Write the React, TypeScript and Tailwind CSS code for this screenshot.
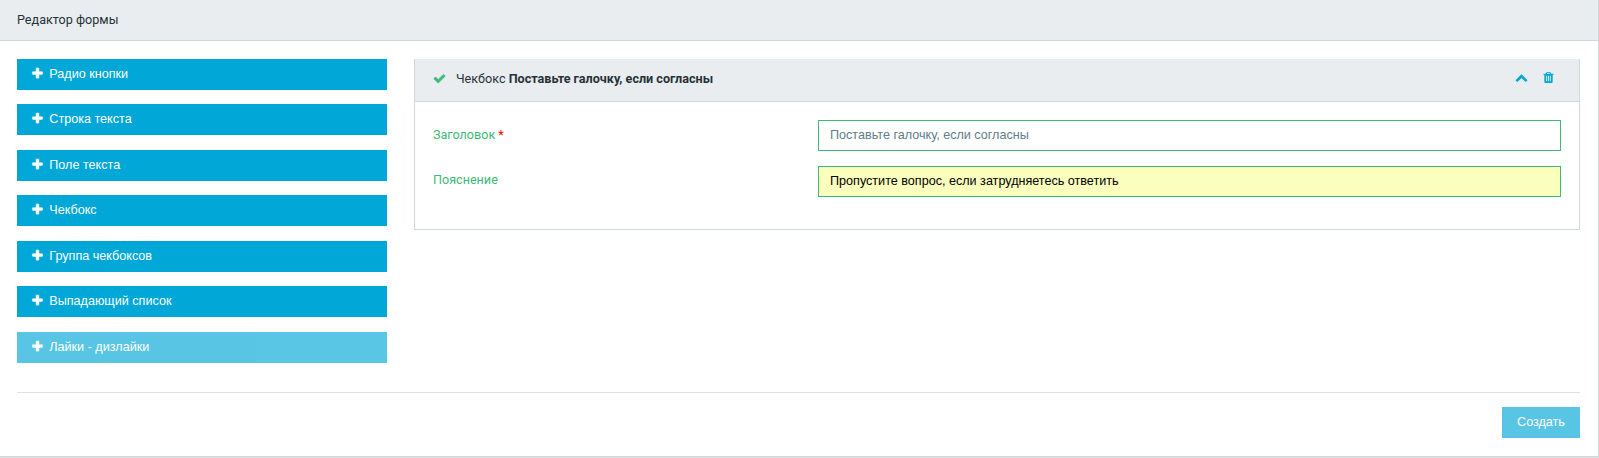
import React from "react";

const icons = {
  plus: "M1600 736v192q0 40-28 68t-68 28h-416v416q0 40-28 68t-68 28h-192q-40 0-68-28t-28-68v-416h-416q-40 0-68-28t-28-68v-192q0-40 28-68t68-28h416v-416q0-40 28-68t68-28h192q40 0 68 28t28 68v416h416q40 0 68 28t28 68z",
  check: "M1671 566q0 40-28 68l-724 724-136 136q-28 28-68 28t-68-28l-136-136-362-362q-28-28-28-68t28-68l136-136q28-28 68-28t68 28l294 295 656-657q28-28 68-28t68 28l136 136q28 28 28 68z",
  up: "M1683 1331l-166 165q-19 19-45 19t-45-19l-531-531-531 531q-19 19-45 19t-45-19l-166-165q-19-19-19-45.500t19-45.500l742-741q19-19 45-19t45 19l742 741q19 19 19 45.500t-19 45.500z",
  trash: "M704 1376v-704q0-14-9-23t-23-9h-64q-14 0-23 9t-9 23v704q0 14 9 23t23 9h64q14 0 23-9t9-23zm256 0v-704q0-14-9-23t-23-9h-64q-14 0-23 9t-9 23v704q0 14 9 23t23 9h64q14 0 23-9t9-23zm256 0v-704q0-14-9-23t-23-9h-64q-14 0-23 9t-9 23v704q0 14 9 23t23 9h64q14 0 23-9t9-23zm-544-992h448l-48-117q-7-9-17-11h-317q-10 2-17 11zm928 32v64q0 14-9 23t-23 9h-96v948q0 83-47 143.500t-113 60.500h-832q-66 0-113-58.500t-47-141.500v-952h-96q-14 0-23-9t-9-23v-64q0-14 9-23t23-9h309l70-167q15-37 54-63t79-26h320q40 0 79 26t54 63l70 167h309q14 0 23 9t9 23z",
};

function Icon({ name, className }: { name: keyof typeof icons; className?: string }) {
  return (
    <svg viewBox="0 0 1792 1792" fill="currentColor" aria-hidden="true" className={`block shrink-0 ${className ?? ""}`}>
      <path d={icons[name]} />
    </svg>
  );
}

const fields = [
  { label: "Радио кнопки" },
  { label: "Строка текста" },
  { label: "Поле текста" },
  { label: "Чекбокс" },
  { label: "Группа чекбоксов" },
  { label: "Выпадающий список" },
  { label: "Лайки - дизлайки", disabled: true },
];

export default function App() {
  return (
    <div className="h-[458px] bg-[#e0e4e6] pb-px font-['Roboto',sans-serif] text-[12.6px] leading-5 text-[#263238]">
      <div className="flex h-full flex-col border-r border-b border-[#cfd8dc] bg-white">
        <header className="flex h-[41px] shrink-0 items-center border-b border-[#cfd8dc] bg-[#e9edf0] pl-[17px]">Редактор формы</header>
        <main className="flex flex-col pt-[18px] pr-[18px] pl-[17px]">
          <div className="flex h-[333px] items-start">
            <div className="flex w-[370px] flex-col gap-[14.45px] font-['Liberation_Sans',sans-serif]">
              {fields.map((f) => (
                <button
                  key={f.label}
                  disabled={f.disabled}
                  className="flex h-[31px] items-center bg-[#00a7d7] pb-px pl-[14px] text-white disabled:opacity-65"
                >
                  <Icon name="plus" className="mr-[5.3px] mb-px size-[13px] stroke-current stroke-[70]" />
                  {f.label}
                </button>
              ))}
            </div>
            <section className="ml-[27px] h-[171px] flex-1 border-x border-b border-[#cfd8dc]">
              <div className="flex h-[43px] items-center border-b border-[#cfd8dc] bg-[#e9edf0] pr-6 pb-[3px] pl-[18px]">
                <Icon name="check" className="mr-[10px] mb-px size-[13px] stroke-current stroke-[60] text-[#3cba78]" />
                <span>
                  Чекбокс <b className="font-bold">Поставьте галочку, если согласны</b>
                </span>
                <span className="mb-[2px] ml-auto flex gap-[14px] text-[#00a7d7]">
                  <Icon name="up" className="size-[13px]" />
                  <Icon name="trash" className="size-[13px]" />
                </span>
              </div>
              <div className="flex flex-col gap-[15px] pt-[18px] pr-[18px] pl-[18px] text-[#3cba78]">
                <div className="flex h-[31px]">
                  <label className="w-[385px] pt-[5px]">
                    Заголовок <span className="text-[#ff0000]">*</span>
                  </label>
                  <input
                    className="flex-1 border border-[#3cba78] px-[11px] pb-0.5 font-['Liberation_Sans',sans-serif] text-[#607d8b]"
                    defaultValue="Поставьте галочку, если согласны"
                  />
                </div>
                <div className="flex h-[31px]">
                  <label className="w-[385px] pt-1">Пояснение</label>
                  <input
                    className="flex-1 border border-[#3cba78] bg-[#faffbd] px-[11px] pb-0.5 font-['Liberation_Sans',sans-serif] text-black"
                    defaultValue="Пропустите вопрос, если затрудняетесь ответить"
                  />
                </div>
              </div>
            </section>
          </div>
          <div className="flex justify-end border-t border-[#e1e1e1] pt-[14px]">
            <button disabled className="h-[31px] w-[78px] bg-[#00a7d7] pb-0.5 font-['Liberation_Sans',sans-serif] text-white opacity-65">
              Создать
            </button>
          </div>
        </main>
      </div>
    </div>
  );
}
